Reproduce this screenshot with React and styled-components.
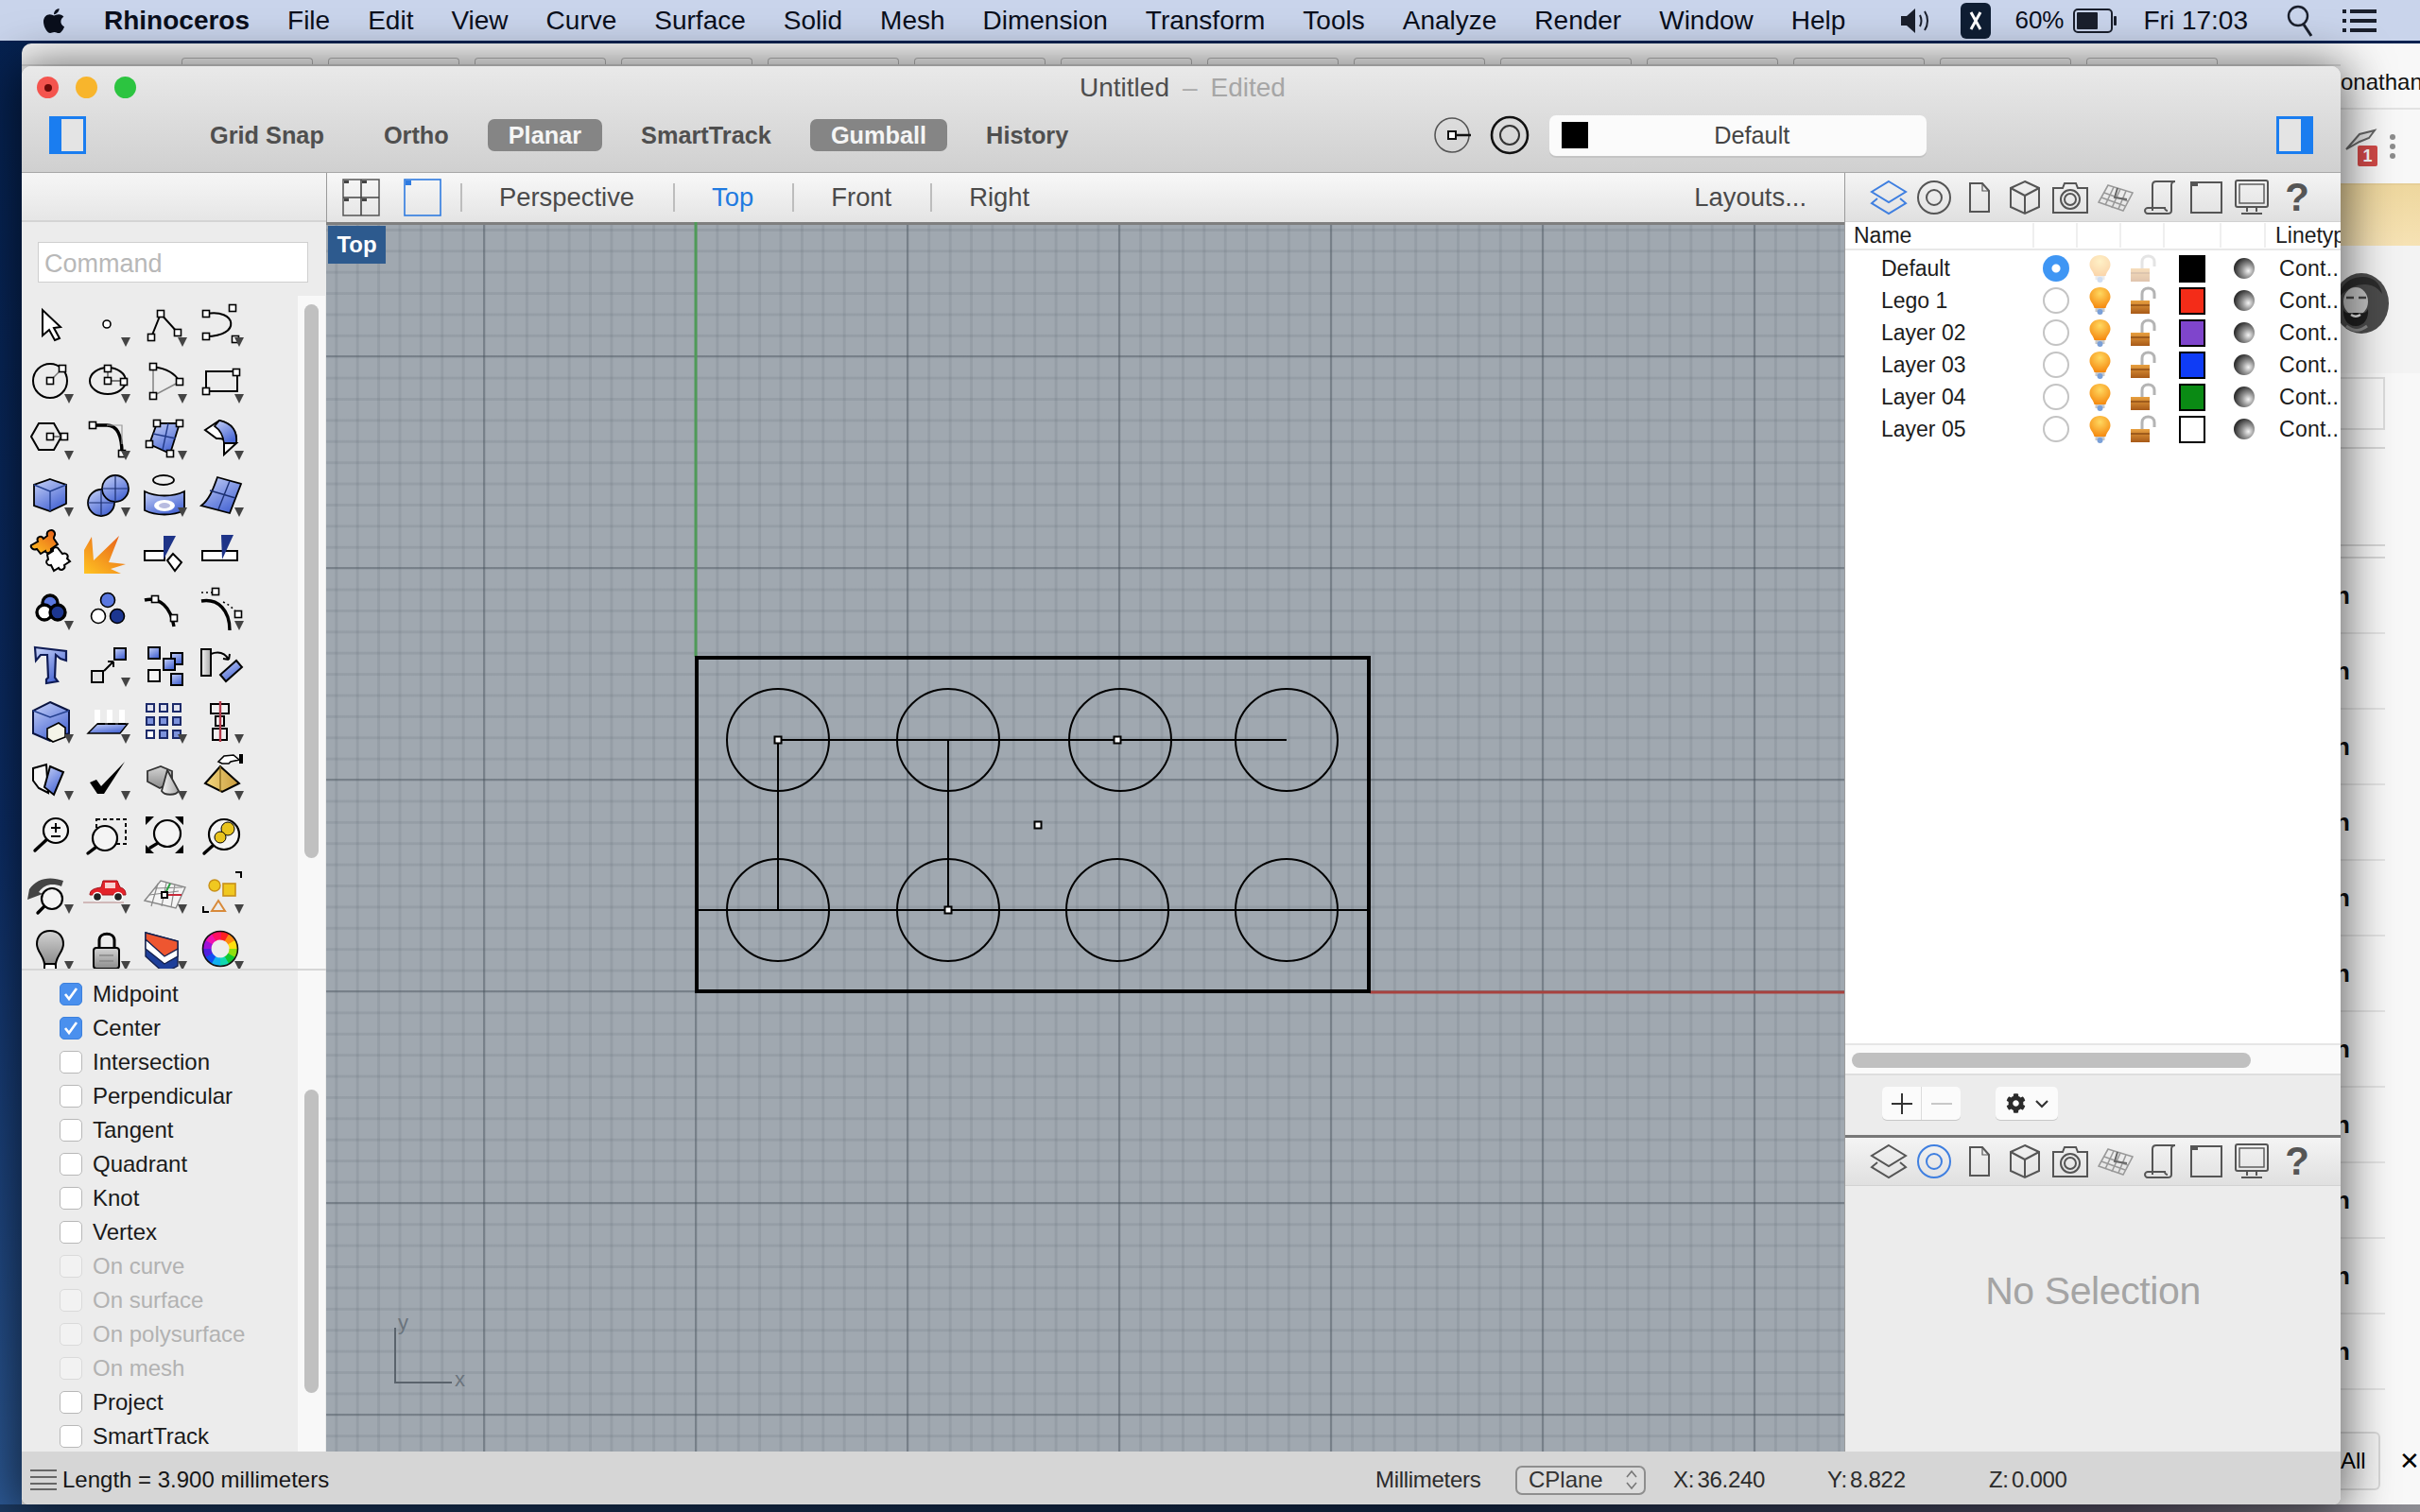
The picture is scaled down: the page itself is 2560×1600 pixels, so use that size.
import React from "react";
import styled, { createGlobalStyle } from "styled-components";
import { FaApple, FaCog } from "react-icons/fa";

const GlobalStyle = createGlobalStyle`
  html, body { margin: 0; padding: 0; background: #0b2a5e; }
  * { box-sizing: border-box; }
  body { font-family: "Liberation Sans", Arial, sans-serif; }
`;

const Desktop = styled.div`
  position: relative;
  width: 2560px;
  height: 1600px;
  overflow: hidden;
  background:
    linear-gradient(90deg, #1c3a62, #14294a 60%, #5a5468 88%, #8c8c92) left bottom / 100% 8px no-repeat,
    linear-gradient(180deg, #05214f, #0c2d66 55%, #2d5a96);
`;

/* menu bar */
const MenuBar = styled.div`
  display: flex;
  align-items: center;
  height: 43px;
  padding: 0 46px 0 42px;
  background: #c9d4eb;
  color: #0a0f1c;
  font-size: 28px;
`;
const MenuItems = styled.div`
  display: flex;
  align-items: center;
  gap: 40px;
  margin-left: 38px;
`;
const AppName = styled.span`
  font-weight: 700;
`;
const Tray = styled.div`
  display: flex;
  align-items: center;
  margin-left: auto;
`;
const TrayItem = styled.div`
  display: flex;
  align-items: center;
  margin-left: ${(p) => p.$ml || 0}px;
  font-size: ${(p) => p.$size || 28}px;
`;

/* browser window that sits behind the app */
const BackWindow = styled.div`
  position: absolute;
  left: 23px;
  top: 46px;
  width: 2537px;
  height: 1546px;
  display: flex;
  background: #f8f8f8;
  border-radius: 10px 0 0 0;
`;
const TabStrip = styled.div`
  width: 2453px;
  height: 24px;
  display: flex;
  align-items: flex-end;
  gap: 16px;
  padding-left: 169px;
  border-bottom: 2px solid #dcdcdc;
`;
const GhostTab = styled.div`
  width: 139px;
  height: 7px;
  border: 1px solid #b8b8b8;
  border-bottom: 0;
  border-radius: 4px 4px 0 0;
`;
const WebColumn = styled.div`
  width: 84px;
  height: 100%;
  display: flex;
  flex-direction: column;
  overflow: hidden;
  color: #111;
`;
const WebUser = styled.div`
  height: 70px;
  padding-top: 27px;
  margin-left: -12px;
  font-size: 24px;
  white-space: nowrap;
  border-bottom: 2px solid #e2e2e2;
`;
const WebTools = styled.div`
  height: 78px;
  display: flex;
  align-items: center;
  gap: 12px;
  padding-left: 4px;
`;
const Badge = styled.div`
  position: absolute;
  left: 14px;
  top: 22px;
  width: 21px;
  height: 22px;
  background: #d24a48;
  border-radius: 2px;
  color: #fff;
  font-size: 18px;
  font-weight: 700;
  text-align: center;
  line-height: 22px;
`;
const PinWrap = styled.div`
  position: relative;
  width: 36px;
  height: 46px;
`;
const Dots = styled.div`
  display: flex;
  flex-direction: column;
  gap: 4px;
  & > i { width: 6px; height: 6px; border-radius: 50%; background: #8c8c8c; }
`;
const WebBanner = styled.div`
  height: 66px;
  background: linear-gradient(180deg, #eed79e, #f6e2b4);
  border-top: 2px solid #e6cf98;
`;
const WebProfile = styled.div`
  height: 135px;
  background: #f3f3f3;
  padding-top: 29px;
  & > svg { display: block; margin-left: -8px; }
`;
const WebBox = styled.div`
  width: 47px;
  height: 56px;
  margin-top: 4px;
  border: 2px solid #dcdcdc;
  border-left: 0;
`;
const WebRule = styled.div`
  width: 47px;
  height: ${(p) => p.$h}px;
  border-bottom: 2px solid #d6d6d6;
`;
const WebRow = styled.div`
  width: 47px;
  height: 80px;
  flex: none;
  display: flex;
  align-items: center;
  font-size: 26px;
  font-weight: 700;
  text-indent: -6px;
  border-bottom: 2px solid #e4e4e4;
  overflow: hidden;
`;
const WebFooter = styled.div`
  display: flex;
  align-items: center;
  position: absolute;
  right: 0;
  bottom: 15px;
  width: 84px;
  height: 62px;
`;
const AllButton = styled.div`
  width: 48px;
  height: 100%;
  display: flex;
  align-items: center;
  font-size: 24px;
  background: #f4f4f4;
  border: 2px solid #d8d8d8;
  border-left: 0;
  border-radius: 0 6px 6px 0;
`;
const CloseMark = styled.div`
  margin-left: 20px;
  font-size: 26px;
`;

/* app window */
const AppWindow = styled.div`
  position: absolute;
  left: 23px;
  top: 70px;
  width: 2453px;
  height: 1522px;
  display: flex;
  flex-direction: column;
  border-radius: 10px 10px 8px 8px;
  overflow: hidden;
  box-shadow: 0 4px 50px 6px rgba(0, 0, 0, 0.6);
  z-index: 1;
`;
const TopBar = styled.div`
  height: 113px;
  flex: none;
  background: linear-gradient(180deg, #e9e9e9, #d0d0d0);
  border-bottom: 1px solid #a8a8a8;
`;
const TitleRow = styled.div`
  position: relative;
  height: 44px;
  display: flex;
  align-items: center;
  justify-content: center;
  padding: 2px 0 0 3px;
  font-size: 28px;
  color: #4e4e4e;
`;
const Lights = styled.div`
  position: absolute;
  left: 16px;
  top: 11px;
  display: flex;
  gap: 18px;
`;
const Light = styled.div`
  width: 23px;
  height: 23px;
  border-radius: 50%;
  background: ${(p) => p.$c};
  display: flex;
  align-items: center;
  justify-content: center;
  & > i { width: 8px; height: 8px; border-radius: 50%; background: #6a0a08; }
`;
const Dash = styled.span`
  margin: 0 14px;
  color: #a8a8a8;
`;
const Edited = styled.span`
  color: #a6a6a6;
`;
const ButtonRow = styled.div`
  height: 68px;
  display: flex;
  align-items: center;
  padding: 0 0 10px 29px;
`;
const Toggles = styled.div`
  display: flex;
  align-items: center;
  gap: 19px;
  margin-left: 109px;
`;
const Toggle = styled.div`
  height: 34px;
  padding: 0 22px;
  display: flex;
  align-items: center;
  border-radius: 7px;
  font-size: 25.3px;
  font-weight: 700;
  color: ${(p) => (p.$on ? "#f5f5f5" : "#4f4f4f")};
  background: ${(p) => (p.$on ? "#858585" : "transparent")};
`;
const LayerPicker = styled.div`
  width: 399px;
  height: 43px;
  margin-left: 21px;
  display: flex;
  align-items: center;
  padding-left: 13px;
  background: #fbfbfb;
  border-radius: 7px;
  box-shadow: 0 2px 0 #c4c4c4;
  font-size: 25.3px;
  color: #444;
`;
const PickerSwatch = styled.div`
  width: 28px;
  height: 28px;
  background: #000;
`;
const PickerLabel = styled.div`
  flex: 1;
  text-align: center;
  padding-right: 12px;
`;
const Spread = styled.div`
  margin-left: ${(p) => p.$ml}px;
  display: flex;
  align-items: center;
  gap: ${(p) => p.$gap || 0}px;
`;

const Body = styled.div`
  flex: 1;
  min-height: 0;
  display: flex;
`;

/* left sidebar */
const Sidebar = styled.div`
  width: 322px;
  flex: none;
  display: flex;
  flex-direction: column;
  background: #ececec;
  overflow: hidden;
`;
const SideStrip = styled.div`
  height: 52px;
  flex: none;
  background: linear-gradient(180deg, #f6f6f6, #e6e6e6);
  border-bottom: 2px solid #d4d4d4;
`;
const CommandZone = styled.div`
  height: 78px;
  flex: none;
  padding: 21px 0 0 17px;
`;
const CommandBox = styled.div`
  width: 286px;
  height: 43px;
  display: flex;
  align-items: center;
  padding: 3px 0 0 6px;
  background: #fff;
  border: 1px solid #cfcfcf;
  font-size: 27px;
  color: #b8b8b8;
`;
const ToolZone = styled.div`
  height: 714px;
  flex: none;
  display: flex;
  border-bottom: 2px solid #d6d6d6;
`;
const ToolGrid = styled.div`
  width: 292px;
  height: 100%;
  display: grid;
  grid-template-columns: repeat(4, 60px);
  grid-auto-rows: 60px;
  overflow: hidden;
`;
const Gutter = styled.div`
  width: 29px;
  flex: none;
  background: #f8f8f8;
  padding: ${(p) => p.$top}px 7px 0;
`;
const Thumb = styled.div`
  width: 15px;
  height: ${(p) => p.$h}px;
  border-radius: 8px;
  background: #c0c0c0;
`;
const SnapZone = styled.div`
  flex: 1;
  min-height: 0;
  display: flex;
`;
const SnapList = styled.div`
  width: 292px;
  padding: 7px 0 0 40px;
`;
const SnapRow = styled.div`
  height: 36px;
  display: flex;
  align-items: center;
  gap: 11px;
  font-size: 24px;
  color: ${(p) => (p.$off ? "#b2b2b2" : "#1a1a1a")};
`;
const CheckBox = styled.div`
  width: 24px;
  height: 24px;
  flex: none;
  display: flex;
  align-items: center;
  justify-content: center;
  border-radius: 5px;
  background: ${(p) => (p.$on ? "#4a90ee" : p.$off ? "#f2f2f2" : "#fff")};
  border: 1px solid ${(p) => (p.$on ? "#3c80dc" : p.$off ? "#dadada" : "#b8b8b8")};
`;

/* middle column */
const Center = styled.div`
  flex: 1;
  min-width: 0;
  display: flex;
  flex-direction: column;
`;
const ViewTabs = styled.div`
  height: 52px;
  flex: none;
  display: flex;
  align-items: center;
  padding: 0 40px 0 16px;
  background: linear-gradient(180deg, #f8f8f8, #e4e4e4);
  border-left: 1px solid #9a9a9a;
  font-size: 27.4px;
  color: #4a4a4a;
`;
const TabGlyph = styled.div`
  display: flex;
  margin-right: ${(p) => p.$mr}px;
`;
const ViewTab = styled.div`
  padding: 0 41px 0 39px;
  line-height: 30px;
  border-left: 2px solid #bdbdbd;
  color: ${(p) => (p.$on ? "#1f7ae0" : "inherit")};
`;
const LayoutsLabel = styled.div`
  margin-left: auto;
`;
const Viewport = styled.div`
  position: relative;
  flex: 1;
  min-height: 0;
  border-top: 3px solid #7f7f7f;
  background-color: #a0a8b0;
  background-image:
    linear-gradient(to right, rgba(66, 76, 86, 0.36) 2px, transparent 2px),
    linear-gradient(to bottom, rgba(66, 76, 86, 0.36) 2px, transparent 2px),
    linear-gradient(to right, rgba(76, 86, 96, 0.13) 3px, transparent 3px),
    linear-gradient(to bottom, rgba(76, 86, 96, 0.13) 3px, transparent 3px);
  background-size: 224px 224px, 224px 224px, 22.4px 22.4px, 22.4px 22.4px;
  background-position: 390px 810px;
`;
const ViewLabel = styled.div`
  position: absolute;
  left: 2px;
  top: 1px;
  width: 61px;
  height: 40px;
  background: #2d5a8e;
  color: #fff;
  font-size: 24px;
  font-weight: 700;
  display: flex;
  align-items: center;
  justify-content: center;
`;
const Canvas = styled.svg`
  position: absolute;
  left: 0;
  top: -3px;
  width: 1606px;
  height: 1301px;
`;

/* right panel */
const Panel = styled.div`
  width: 525px;
  flex: none;
  display: flex;
  flex-direction: column;
  background: #ececec;
  border-left: 1px solid #9a9a9a;
`;
const IconBar = styled.div`
  height: ${(p) => p.$h || 52}px;
  flex: none;
  display: flex;
  align-items: center;
  padding-left: 22px;
  background: linear-gradient(180deg, #f4f4f4, #e0e0e0);
  border-bottom: 1px solid #d2d2d2;
`;
const IconSlot = styled.div`
  width: 48px;
  height: 44px;
  display: flex;
  align-items: center;
  justify-content: center;
  color: #555;
  font-size: 42px;
  font-weight: 700;
`;
const LayerTable = styled.div`
  height: 869px;
  flex: none;
  background: #fff;
  font-size: 23px;
  color: #1c1c1c;
  overflow: hidden;
`;
const columns = "200px 46px 46px 46px 60px 47px 80px";
const TableHead = styled.div`
  display: grid;
  grid-template-columns: ${columns};
  height: 30px;
  margin-bottom: 2px;
  align-items: center;
  font-size: 23px;
  border-bottom: 2px solid #e8e8e8;
  white-space: nowrap;
`;
const HeadCell = styled.div`
  height: 26px;
  line-height: 26px;
  padding-left: ${(p) => p.$pad || 0}px;
  border-right: ${(p) => (p.$last ? "0" : "2px solid #efefef")};
  overflow: ${(p) => (p.$last ? "visible" : "hidden")};
`;
const TableRow = styled.div`
  display: grid;
  grid-template-columns: ${columns};
  height: 34px;
  align-items: center;
`;
const NameCell = styled.div`
  padding-left: 38px;
`;
const IconCell = styled.div`
  display: flex;
  justify-content: center;
  align-items: center;
`;
const TypeCell = styled.div`
  padding-left: 14px;
  white-space: nowrap;
  letter-spacing: 0.3px;
`;
const Radio = styled.div`
  width: 28px;
  height: 28px;
  border-radius: 50%;
  background: ${(p) => (p.$on ? "radial-gradient(circle, #fff 0 4px, #3f96f4 5px)" : "#fff")};
  border: ${(p) => (p.$on ? "0" : "2px solid #c4c4c4")};
`;
const Swatch = styled.div`
  width: 28px;
  height: 29px;
  margin-right: 2px;
  background: ${(p) => p.$c};
  border: 2px solid #000;
`;
const Sphere = styled.div`
  width: 22px;
  height: 22px;
  border-radius: 50%;
  background: radial-gradient(circle at 70% 62%, #f4f4f4 0, #9a9a9a 30%, #2e2e2e 72%);
`;
const ScrollTrack = styled.div`
  height: 32px;
  flex: none;
  padding: 8px 0 0 7px;
  background: #fafafa;
  border-top: 2px solid #e6e6e6;
`;
const ScrollThumb = styled.div`
  width: 422px;
  height: 16px;
  border-radius: 8px;
  background: #c0c0c0;
`;
const ControlBar = styled.div`
  height: 68px;
  flex: none;
  display: flex;
  align-items: center;
  padding: 0 0 4px 39px;
  background: #ececec;
  border-top: 2px solid #dedede;
  border-bottom: 3px solid #787878;
`;
const ControlGroup = styled.div`
  display: flex;
  height: 35px;
  margin-right: 37px;
  background: #fbfbfb;
  border-radius: 5px;
  box-shadow: 0 1px 0 #c8c8c8;
`;
const ControlButton = styled.div`
  width: ${(p) => p.$w}px;
  height: 100%;
  display: flex;
  align-items: center;
  justify-content: center;
  gap: 10px;
  color: #2a2a2a;
  &:not(:last-child) { border-right: 1px solid #dcdcdc; }
`;
const Properties = styled.div`
  flex: 1;
  min-height: 0;
  display: flex;
  align-items: center;
  justify-content: center;
  padding: 0 0 58px 0;
  font-size: 41px;
  letter-spacing: -0.4px;
  color: #a4a4a4;
`;

/* status bar */
const StatusBar = styled.div`
  height: 56px;
  flex: none;
  display: flex;
  align-items: center;
  padding: 4px 0 0 9px;
  background: #d6d6d6;
  font-size: 24px;
  color: #161616;
`;
const StatusMessage = styled.div`
  width: 1423px;
  display: flex;
  align-items: center;
  gap: 6px;
`;
const StatusCell = styled.div`
  width: ${(p) => p.$w}px;
  color: #2c2c2c;
  white-space: nowrap;
  word-spacing: -3px;
  letter-spacing: -0.3px;
`;
const PlaneSelect = styled.div`
  width: 138px;
  height: 31px;
  margin-right: 29px;
  display: flex;
  align-items: center;
  justify-content: space-between;
  padding: 0 6px 0 12px;
  border: 2px solid #8e8e8e;
  border-radius: 7px;
  background: #dcdcdc;
  color: #333;
`;

/* menu bar pieces */
const Speaker = () => (
  <svg width="36" height="30" viewBox="0 0 36 30">
    <path d="M2 10h6l9-8v26l-9-8H2z" fill="#1a1f2c" />
    <path d="M22 9c2 4 2 8 0 12M27 5c4 6 4 14 0 20" fill="none" stroke="#1a1f2c" strokeWidth="2" />
  </svg>
);
const XTile = () => (
  <svg width="32" height="38" viewBox="0 0 32 38">
    <rect width="32" height="38" rx="6" fill="#0f1e33" />
    <path d="M11 10l10 18M21 10L11 28" stroke="#fff" strokeWidth="3" />
  </svg>
);
const Battery = () => (
  <svg width="46" height="26" viewBox="0 0 46 26">
    <rect x="1" y="1" width="40" height="24" rx="4" fill="none" stroke="#1a1f2c" strokeWidth="2" />
    <rect x="4" y="4" width="22" height="18" rx="1" fill="#1a1f2c" />
    <rect x="43" y="8" width="3" height="10" rx="1" fill="#1a1f2c" />
  </svg>
);
const SearchGlyph = () => (
  <svg width="28" height="36" viewBox="0 0 28 36">
    <circle cx="12" cy="13" r="10" fill="none" stroke="#1a1f2c" strokeWidth="2.4" />
    <path d="M18 22l8 12" stroke="#1a1f2c" strokeWidth="3" />
  </svg>
);
const ListGlyph = () => (
  <svg width="36" height="26" viewBox="0 0 36 26">
    {[3, 13, 23].map((y) => (
      <g key={y} fill="#1a1f2c">
        <rect x="0" y={y - 2} width="4" height="4" />
        <rect x="8" y={y - 2} width="28" height="4" />
      </g>
    ))}
  </svg>
);

/* top bar pieces */
const SideToggle = ({ right }) => (
  <svg width="39" height="40" viewBox="0 0 39 40">
    <rect x="1.5" y="1.5" width="36" height="37" fill="#e4e4e4" stroke="#1a7df0" strokeWidth="3" />
    <rect x={right ? 26 : 0} y="0" width="13" height="40" fill="#1a7df0" />
  </svg>
);
const CPlaneGlyph = () => (
  <svg width="40" height="40" viewBox="0 0 40 40">
    <circle cx="19" cy="20" r="18" fill="none" stroke="#555" strokeWidth="1.6" />
    <path d="M19 20h20" stroke="#111" strokeWidth="2.5" />
    <rect x="15" y="16" width="8" height="8" fill="#fff" stroke="#111" strokeWidth="2" />
  </svg>
);
const RingGlyph = () => (
  <svg width="42" height="42" viewBox="0 0 42 42">
    <circle cx="21" cy="21" r="19" fill="none" stroke="#111" strokeWidth="2.6" />
    <circle cx="21" cy="21" r="10" fill="none" stroke="#333" strokeWidth="2" />
  </svg>
);
const LayoutGlyph = () => (
  <svg width="40" height="40" viewBox="0 0 40 40">
    <rect x="1" y="1" width="38" height="38" fill="none" stroke="#555" strokeWidth="1.5" />
    <path d="M1 20h38M20 1v38" stroke="#444" strokeWidth="1.6" />
    <path d="M2 2h5v3H2zM21 2h5v3h-5zM2 21h5v3H2zM21 21h5v3h-5z" fill="#444" />
  </svg>
);
const SingleGlyph = () => (
  <svg width="40" height="40" viewBox="0 0 40 40">
    <rect x="1" y="1" width="38" height="38" fill="none" stroke="#2f7be0" strokeWidth="1.6" />
    <rect x="2" y="2" width="6" height="5" fill="#2f7be0" />
  </svg>
);
const Portrait = () => (
  <svg width="60" height="64" viewBox="0 0 60 64">
    <ellipse cx="30" cy="32" rx="29" ry="32" fill="#4c4c4c" />
    <path d="M6 26c2-16 14-22 26-22 10 0 18 6 20 18-6-8-12-10-20-10S12 18 6 26z" fill="#2c2c2c" />
    <ellipse cx="24" cy="30" rx="13" ry="15" fill="#c4c4c4" />
    <path d="M14 26h8M27 26h8" stroke="#444" strokeWidth="2.4" />
    <path d="M11 38c2 6 6 4 13 4s10 2 13-4c1 10-4 18-13 18S10 48 11 38z" fill="#1f1f1f" />
    <path d="M19 44c3 2 7 2 10 0" stroke="#e8e8e8" strokeWidth="2.4" fill="none" />
    <path d="M14 56c8 6 14 6 22 0" stroke="#8a8a8a" strokeWidth="3" fill="none" />
  </svg>
);

/* panel tab icons */
const stroke = { fill: "none", stroke: "#555", strokeWidth: 2 };
const PanelIcons = {
  layers: (c) => (
    <svg width="40" height="40" viewBox="0 0 40 40" fill="none" stroke={c || "#555"} strokeWidth="2">
      <path d="M20 3l18 11-18 11L2 14z" />
      <path d="M8 21l-6 5 18 11 18-11-6-5" />
    </svg>
  ),
  ring: (c) => (
    <svg width="38" height="38" viewBox="0 0 38 38" fill="none" stroke={c || "#555"} strokeWidth="2">
      <circle cx="19" cy="19" r="17" />
      <circle cx="19" cy="19" r="8" />
    </svg>
  ),
  doc: () => (
    <svg width="26" height="34" viewBox="0 0 26 34" {...stroke}>
      <path d="M3 2h13l7 8v22H3z" />
      <path d="M16 2v8h7" strokeWidth="1.2" />
    </svg>
  ),
  cube: () => (
    <svg width="34" height="38" viewBox="0 0 34 38" {...stroke}>
      <path d="M17 2l15 7v20l-15 7-15-7V9z" />
      <path d="M2 9l15 8 15-8M17 17v19" />
    </svg>
  ),
  camera: () => (
    <svg width="40" height="36" viewBox="0 0 40 36" {...stroke}>
      <path d="M2 8h10l2-5h12l2 5h10v26H2z" />
      <circle cx="20" cy="20" r="10" />
      <circle cx="20" cy="20" r="6" />
    </svg>
  ),
  grid: () => (
    <svg width="38" height="32" viewBox="0 0 38 32" fill="none" stroke="#999" strokeWidth="1.6">
      <path d="M11 3l26 8-10 19-26-9z" />
      <path d="M7 11l25 9M4 16l25 9M17 5L8 24M24 7l-9 20M30 9l-8 19" />
      <path d="M21 6l-3 10 13 2" stroke="#666" strokeWidth="2" />
    </svg>
  ),
  scroll: () => (
    <svg width="36" height="38" viewBox="0 0 36 38" {...stroke}>
      <path d="M9 33V6c0-3 2-4 4-4h20c-3 0-4 2-4 4v27c0 2-2 3-4 3H4c-2 0-3-2-3-3 0-2 2-3 3-3h18c0 2 2 3 3 3" />
    </svg>
  ),
  window: () => (
    <svg width="34" height="34" viewBox="0 0 34 34" {...stroke}>
      <rect x="1" y="1" width="32" height="32" />
      <rect x="2" y="2" width="6" height="3" fill="#555" stroke="none" />
    </svg>
  ),
  monitor: () => (
    <svg width="36" height="38" viewBox="0 0 36 38" {...stroke}>
      <rect x="1" y="1" width="34" height="28" rx="2" />
      <rect x="5" y="5" width="26" height="20" strokeWidth="1.4" />
      <path d="M13 30v4M23 30v4M7 36h22" />
    </svg>
  ),
};
const panelKeys = ["layers", "ring", "doc", "cube", "camera", "grid", "scroll", "window", "monitor"];

const PanelTabs = ({ active, h }) => (
  <IconBar $h={h}>
    {panelKeys.map((k) => (
      <IconSlot key={k}>{PanelIcons[k](k === active ? "#3f7fe0" : undefined)}</IconSlot>
    ))}
    <IconSlot>?</IconSlot>
  </IconBar>
);

const Bulb = ({ faded }) => (
  <svg width="25" height="30" viewBox="0 0 24 30" opacity={faded ? 0.35 : 1}>
    <path d="M12 1c6 0 11 4 11 10 0 5-4 7-5 12H6C5 18 1 16 1 11 1 5 6 1 12 1z" fill="url(#bulbFill)" />
    <rect x="7" y="23" width="10" height="4" fill="#c8c8c8" />
    <circle cx="12" cy="27" r="3" fill="#7aa0d8" />
  </svg>
);
const Padlock = ({ faded }) => (
  <svg width="28" height="30" viewBox="0 0 28 30" opacity={faded ? 0.35 : 1}>
    <path d="M13 15V8c0-8 13-8 13 0v5" fill="none" stroke="#b4b4b4" strokeWidth="3" />
    <rect x="1" y="15" width="20" height="14" fill="url(#lockFill)" />
    <path d="M1 20h20" stroke="#8a4a14" strokeWidth="1.4" />
  </svg>
);

/* toolbox drawings, each one on a 60 x 60 tile */
const Pt = ({ x, y, s = 7 }) => (
  <rect x={x - s / 2} y={y - s / 2} width={s} height={s} fill="#fff" stroke="#000" strokeWidth="1.6" />
);
const Lens = ({ x, y, r, hx, hy, w = 2.2 }) => (
  <g>
    <path d={`M${hx} ${hy}L${x - r * 0.72} ${y + r * 0.72}`} stroke="#000" strokeWidth="3.4" strokeLinecap="round" />
    <circle cx={x} cy={y} r={r} fill="#f4f4f4" stroke="#000" strokeWidth={w} />
  </g>
);
const Sq = ({ x, y, s = 12, fill = "url(#blue)", c = "#000", w = 2 }) => (
  <rect x={x - s / 2} y={y - s / 2} width={s} height={s} fill={fill} stroke={c} strokeWidth={w} />
);
const line = { fill: "none", stroke: "#000", strokeWidth: 2 };
const wheel = ["#ff2020", "#ff8a10", "#ffe010", "#90e010", "#10c830", "#10d8b0", "#10b0f0", "#1050f0", "#5020e0", "#a010d8", "#f010b0", "#ff1060"];

const TOOLS = [
  // row 0
  [0, <path d="M22 15v27l7-6 6 11 5-2-6-11 7-1z" fill="#fff" stroke="#000" strokeWidth="2" />],
  [1, <circle cx="30" cy="30" r="4" fill="#fff" stroke="#000" strokeWidth="1.6" />],
  [1, <g><path d="M17 44l10-25 18 20" {...line} /><Pt x={17} y={44} /><Pt x={27} y={19} /><Pt x={45} y={39} /></g>],
  [1, <g><path d="M15 19c32-6 38 24 0 24" {...line} /><Pt x={15} y={19} /><Pt x={43} y={13} /><Pt x={15} y={43} /><Pt x={46} y={46} /></g>],
  // row 1
  [1, <g><circle cx="30" cy="30" r="18" {...line} /><path d="M30 30l13-13" stroke="#777" strokeWidth="1.4" /><Pt x={30} y={30} /><Pt x={43} y={17} /></g>],
  [1, <g><ellipse cx="31" cy="30" rx="19" ry="14" {...line} /><path d="M31 17v13h17" stroke="#555" strokeWidth="1.4" fill="none" /><Pt x={31} y={17} /><Pt x={31} y={30} /><Pt x={48} y={31} /></g>],
  [1, <g><path d="M19 15v31l28-15" fill="none" stroke="#888" strokeWidth="1.6" /><path d="M19 15c14 2 24 8 28 16" {...line} /><Pt x={19} y={15} /><Pt x={47} y={31} /><Pt x={19} y={46} /></g>],
  [1, <g><rect x="15" y="20" width="33" height="21" {...line} /><Pt x={15} y={41} /><Pt x={47} y={21} /></g>],
  // row 2
  [1, <g><path d="M10 29l8-14h16l8 14-8 14H18z" {...line} /><path d="M30 29h15" stroke="#555" strokeWidth="1.4" /><Pt x={30} y={29} /><Pt x={45} y={29} /></g>],
  [1, <g><path d="M15 17h15c10 0 16 8 16 30" fill="none" stroke="#000" strokeWidth="3.4" /><path d="M30 17h16v20" fill="none" stroke="#999" strokeWidth="1.2" /><Pt x={15} y={17} /><Pt x={46} y={47} /></g>],
  [1, <g><path d="M23 15h24l-10 32-22-10z" fill="url(#blue)" stroke="#000" strokeWidth="1.8" /><path d="M19 26l24 5M35 15l-6 28" stroke="#223a88" strokeWidth="1.4" /><Pt x={23} y={15} /><Pt x={47} y={15} /><Pt x={37} y={47} /><Pt x={15} y={37} /></g>],
  [1, <g><path d="M14 22l15-10c14 3 19 12 18 24H36c0-6-10-5-10-5z" fill="#fff" stroke="#000" strokeWidth="2" /><path d="M24 18l5-6c14 3 19 12 18 24H34c-1-8-4-14-10-18z" fill="url(#blue)" stroke="#000" strokeWidth="1.6" /><path d="M34 36h13l-13 12z" fill="#fff" stroke="#000" strokeWidth="2" /></g>],
  // row 3
  [1, <g><path d="M30 14l17 6v20l-17 8-17-6V20z" fill="url(#blue)" stroke="#000" strokeWidth="1.8" /><path d="M13 20l17 7 17-7M30 27v21" stroke="#24408f" strokeWidth="1.4" fill="none" /></g>],
  [1, <g><circle cx="24" cy="39" r="14" fill="url(#blue)" stroke="#000" strokeWidth="1.8" /><circle cx="39" cy="24" r="14" fill="url(#blue)" stroke="#000" strokeWidth="1.8" /><path d="M10 39h28M24 25v28M25 24h28M39 10v28" stroke="#1b2f70" strokeWidth="1.2" /></g>],
  [1, <g><ellipse cx="30" cy="15" rx="11" ry="5" fill="#f0f0f0" stroke="#000" strokeWidth="1.8" /><path d="M10 27c12 6 30 6 42 0v20c-12 6-30 6-42 0z" fill="url(#blue)" stroke="#000" strokeWidth="1.8" /><ellipse cx="31" cy="42" rx="11" ry="6" fill="#fff" /><ellipse cx="31" cy="42" rx="6" ry="3" fill="#b8bce0" /></g>],
  [1, <g><path d="M27 12l25 7-12 31-30-8c8-6 12-16 17-30z" fill="url(#blue)" stroke="#000" strokeWidth="1.8" /><path d="M19 26l27 8M40 16l-12 30" stroke="#1b2f70" strokeWidth="1.4" /></g>],
  // row 4
  [0, <g strokeWidth="2" stroke="#000"><path d="M10 24l7-4c-2-5 4-7 6-3l4-3c-2-6 6-8 8-3 1 3-2 4-1 6l4 6-7 5c1 4-5 6-6 2l-5 3-4-5c-4 2-7-2-6-4z" fill="url(#orange)" /><path d="M27 34l6-4c-1-4 5-5 6-2l4 5c4-2 7 2 5 5l3 3-6 4c2 4-4 7-6 3l-5 3-3-6c-4 1-7-4-3-6z" fill="#fff" /></g>],
  [0, <path d="M6 54V29l8-14 2 25 27-26-11 28 18 2-16 5 11 5z" fill="url(#orange)" />],
  [0, <g stroke="#000" strokeWidth="2"><rect x="10" y="30" width="21" height="10" fill="#fff" /><path d="M30 14h13l-13 25z" fill="#1e3488" stroke="none" /><path d="M34 40l6-7 9 9-7 9z" fill="#fff" /></g>],
  [0, <g><rect x="11" y="30" width="37" height="10" fill="#fff" stroke="#000" strokeWidth="2" /><path d="M31 13h13l-12 26z" fill="#1e3488" /></g>],
  // row 5
  [1, <g stroke="#000" strokeWidth="3.4"><circle cx="30" cy="25" r="8" fill="#5a78e0" /><circle cx="24" cy="35" r="8" fill="#fff" /><circle cx="38" cy="35" r="8" fill="#1c3690" /></g>],
  [0, <g stroke="#000" strokeWidth="1.6"><circle cx="31" cy="22" r="7.5" fill="#5a78e0" /><circle cx="21" cy="39" r="7.5" fill="#fff" /><circle cx="41" cy="39" r="7.5" fill="#1c3690" /></g>],
  [0, <g><path d="M10 22c16-4 28 8 31 28" fill="none" stroke="#000" strokeWidth="3.4" /><Pt x={21} y={21} /><Pt x={41} y={41} /></g>],
  [1, <g><path d="M10 23c18-3 30 10 30 31" fill="none" stroke="#000" strokeWidth="3.4" /><path d="M10 14h14M33 24c9 4 14 10 16 16" fill="none" stroke="#000" strokeWidth="1.6" strokeDasharray="2 3" /><Pt x={25} y={13} /><Pt x={49} y={37} /></g>],
  // row 6
  [0, <path d="M14 12l33 4v10l-6-2-5-4-1 24 3 4-12 2v-4l2-2-1-24h-7l-5 6z" fill="url(#blue)" stroke="#0f1c55" strokeWidth="2.2" />],
  [1, <g><Sq x={44} y={19} /><Sq x={20} y={43} fill="#e4e4e4" /><path d="M27 37l10-10M37 27h-6M37 27v6" {...line} /></g>],
  [0, <g><Sq x={20} y={18} /><Sq x={44} y={24} /><Sq x={36} y={30} /><Sq x={20} y={42} fill="#f4f4f4" /><Sq x={44} y={46} /></g>],
  [0, <g><rect x="10" y="14" width="10" height="28" fill="url(#pale)" stroke="#000" strokeWidth="2" /><path d="M20 19c8-3 15-1 19 6M39 25l-6-1M39 25l1-6" {...line} /><path d="M36 48l-6-7 17-15 6 7z" fill="url(#blue)" stroke="#000" strokeWidth="2" /></g>],
  // row 7
  [1, <g><path d="M30 10l20 9v24l-20 8-18-8V19z" fill="url(#blue)" stroke="#0a1440" strokeWidth="2" /><path d="M12 19l18 7 20-7" stroke="#24408f" strokeWidth="1.6" fill="none" /><path d="M27 38l12-6 7 5v10l-13 5-6-4z" fill="#f4f4e8" stroke="#000" strokeWidth="1.6" /></g>],
  [1, <g><rect x="17" y="18" width="6" height="20" fill="#fff" /><rect x="30" y="18" width="6" height="20" fill="#fff" /><rect x="43" y="18" width="6" height="20" fill="#fff" /><path d="M10 43l10-10h32l-8 10z" fill="url(#blue)" stroke="#000" strokeWidth="1.4" /><path d="M20 33h32" stroke="#000" strokeWidth="2" strokeDasharray="8 3" /></g>],
  [1, <g>{[16, 30, 44].map((y) => [16, 30, 44].map((x) => <Sq key={`${x}-${y}`} x={x} y={y} s={8} c="#1c2a6a" fill={(x === 16 && y === 44) ? "#fff" : y === 16 ? "#dfe2f0" : "#7c92dc"} />))}</g>],
  [1, <g fill="#f0f0f0" stroke="#000" strokeWidth="2"><rect x="20" y="12" width="19" height="10" /><rect x="25" y="25" width="9" height="10" /><rect x="22" y="38" width="15" height="12" /><path d="M30 9v43" stroke="#b43a4a" strokeWidth="2.4" /></g>],
  // row 8
  [1, <g stroke="#000" strokeWidth="2"><path d="M12 20l14-4 2 30-10-5-6-8z" fill="#f6f6f6" /><path d="M30 18l14 6-10 24-10-8z" fill="url(#blue)" /></g>],
  [1, <path d="M12 35l7-3 5 7 25-26-22 34h-7z" fill="#000" />],
  [1, <g stroke="#333" strokeWidth="1.8"><path d="M13 23l14-5 12 5v11l-13 7-13-7z" fill="url(#gray)" /><path d="M34 22l12 22c-3 5-15 5-18 0z" fill="url(#pale)" /></g>],
  [1, <g><path d="M30 18l20 18-18 9-18-9z" fill="url(#gold)" stroke="#000" strokeWidth="2" /><path d="M30 18v27" stroke="#8a6a1e" strokeWidth="1.4" /><path d="M28 13l6-6 10-1 6 5-9 2-2 2-7 0z" fill="#fff" stroke="#000" strokeWidth="1.6" /><rect x="50" y="5" width="4" height="10" fill="#000" /></g>],
  // row 9
  [0, <g><Lens x={36} y={26} r={13} hx={14} hy={47} /><path d="M31 23h10M36 18v10M31 32h10" stroke="#000" strokeWidth="2" /></g>],
  [0, <g><rect x="19" y="14" width="31" height="26" fill="none" stroke="#000" strokeWidth="2" strokeDasharray="4 3" /><Lens x={28} y={34} r={13} hx={10} hy={50} /></g>],
  [0, <g><path d="M11 11h9l-9 9zM51 11h-9l9 9zM11 50h9l-9-9zM51 50h-9l9-9z" fill="#000" /><Lens x={34} y={29} r={14} hx={16} hy={44} /></g>],
  [0, <g><Lens x={34} y={30} r={16} hx={13} hy={50} /><circle cx="38" cy="24" r="7" fill="#e8c41e" stroke="#000" /><circle cx="30" cy="33" r="6" fill="#e8c41e" stroke="#000" /></g>],
  // row 10
  [1, <g><path d="M8 28c8-12 22-14 36-9l-2 6c-10-4-18-2-24 6l4 2-16 6z" fill="#444" /><Lens x={32} y={38} r={11} hx={17} hy={53} /></g>],
  [1, <g><path d="M12 34c0-6 6-7 12-8l2-7h15l3 7c4 1 6 3 6 8z" fill="#e3222a" stroke="#a01018" strokeWidth="1" /><rect x="28" y="21" width="11" height="6" fill="#f8d0d0" /><circle cx="20" cy="36" r="4.5" fill="#222" stroke="#fff" strokeWidth="1.4" /><circle cx="42" cy="36" r="4.5" fill="#222" stroke="#fff" strokeWidth="1.4" /><path d="M5 42h43" stroke="#c8a8a8" strokeWidth="1.6" /></g>],
  [1, <g><path d="M10 40l17-21 26 7-10 22z" fill="#f4f4f4" stroke="#888" strokeWidth="1.4" /><path d="M15 34l31-4M21 27l29-1M24 22l-7 24M33 21l-5 25M42 23l-4 24" stroke="#888" strokeWidth="1.2" /><path d="M31 34h18" stroke="#c82a3a" strokeWidth="2" /><path d="M31 34l6-12" stroke="#28a040" strokeWidth="2" /><Sq x={31} y={34} s={6} fill="#fff" /></g>],
  [1, <g><circle cx="24" cy="24" r="6" fill="#f0c820" stroke="#c89018" strokeWidth="1.4" /><rect x="33" y="22" width="13" height="13" fill="#f0c820" stroke="#c89018" strokeWidth="1.6" /><path d="M28 40l7 11H21z" fill="none" stroke="#d88a3a" strokeWidth="2" /><path d="M46 10h6v6M12 46v6h6" {...line} /></g>],
  // row 11
  [1, <g><path d="M30 12c9 0 14 6 14 14 0 8-7 12-8 21H24c-1-9-8-13-8-21 0-8 5-14 14-14z" fill="url(#gray)" stroke="#000" strokeWidth="2" /><rect x="24" y="47" width="12" height="7" rx="2" fill="#fff" stroke="#000" strokeWidth="2" /></g>],
  [1, <g><path d="M22 30V22c0-9 16-9 16 0v8" fill="none" stroke="#000" strokeWidth="3" /><rect x="16" y="30" width="27" height="22" rx="3" fill="url(#gray)" stroke="#000" strokeWidth="2" /><path d="M22 38h15M22 44h15" stroke="#888" strokeWidth="1.6" /></g>],
  [1, <g stroke="#14214f" strokeWidth="1.4"><path d="M11 14l34 9v26l-14 8-20-18z" fill="#1e3f9a" /><path d="M11 22l34 9v8l-14 8-20-16z" fill="#fff" /><path d="M11 14l34 9v8l-14 8-20-18z" fill="#ee5630" /></g>],
  [1, <g fill="none" strokeWidth="9">{wheel.map((c, i) => {
    const a0 = (i / 12) * 2 * Math.PI - Math.PI / 2;
    const a1 = ((i + 1.1) / 12) * 2 * Math.PI - Math.PI / 2;
    return <path key={c} stroke={c} d={`M${30 + 14 * Math.cos(a0)} ${31 + 14 * Math.sin(a0)}A14 14 0 0 1 ${30 + 14 * Math.cos(a1)} ${31 + 14 * Math.sin(a1)}`} />;
  })}<circle cx="30" cy="31" r="18.5" stroke="#111" strokeWidth="1.6" /></g>],
];

const ToolTile = ({ flag, children }) => (
  <svg width="60" height="60" viewBox="0 0 60 60">
    {children}
    {flag ? <path d="M45 44h10l-5 10z" fill="#444" /> : null}
  </svg>
);

const GradientDefs = styled.svg`
  position: absolute;
  width: 0;
  height: 0;
`;

const SNAPS = [
  ["Midpoint", "on"], ["Center", "on"], ["Intersection"], ["Perpendicular"], ["Tangent"], ["Quadrant"], ["Knot"], ["Vertex"],
  ["On curve", "off"], ["On surface", "off"], ["On polysurface", "off"], ["On mesh", "off"], ["Project"], ["SmartTrack"],
];
const LAYERS = [
  ["Default", "#000"], ["Lego 1", "#f42c18"], ["Layer 02", "#7f45cc"],
  ["Layer 03", "#0f3cf5"], ["Layer 04", "#0a8a14"], ["Layer 05", "#fff"],
];
const MENUS = ["File", "Edit", "View", "Curve", "Surface", "Solid", "Mesh", "Dimension", "Transform", "Tools", "Analyze", "Render", "Window", "Help"];
const COLS = [823, 1003, 1185, 1361];
const COLS_LOW = [823, 1003, 1182, 1361];

const Drawing = () => (
  <Canvas viewBox="345 235 1606 1301">
    <path d="M736 235V695" stroke="#4f9a58" strokeWidth="3" />
    <path d="M1449 1050H1951" stroke="#a8423e" strokeWidth="3" />
    <rect x="737" y="696" width="711" height="353" fill="none" stroke="#000" strokeWidth="4" />
    {COLS.map((x) => <circle key={x} cx={x} cy="783" r="54" fill="none" stroke="#000" strokeWidth="2" />)}
    {COLS_LOW.map((x) => <circle key={x} cx={x} cy="963" r="54" fill="none" stroke="#000" strokeWidth="2" />)}
    <path d="M823 783H1361M736 963H1449M823 783V963M1003 783V963" fill="none" stroke="#000" strokeWidth="2" />
    {[[823, 783], [1182, 783], [1003, 963], [1098, 873]].map(([x, y]) => (
      <rect key={x} x={x - 3.5} y={y - 3.5} width="7" height="7" fill="#fff" stroke="#000" strokeWidth="2" />
    ))}
    <path d="M418 1405V1463H478" fill="none" stroke="#5a636c" strokeWidth="2" />
    <text x="421" y="1407" fontSize="22" fill="#6b747d" fontFamily="Liberation Sans">y</text>
    <text x="481" y="1467" fontSize="22" fill="#6b747d" fontFamily="Liberation Sans">x</text>
  </Canvas>
);

const App = () => (
  <Desktop>
    <GlobalStyle />
    <GradientDefs>
      <defs>
        <linearGradient id="blue" x1="0" y1="0" x2="0.6" y2="1"><stop offset="0" stopColor="#c8d3f8" /><stop offset="1" stopColor="#4a68d4" /></linearGradient>
        <linearGradient id="orange" x1="0.8" y1="0" x2="0" y2="1"><stop offset="0" stopColor="#e8641a" /><stop offset="1" stopColor="#ffc422" /></linearGradient>
        <linearGradient id="pale" x1="0" y1="0" x2="1" y2="0"><stop offset="0" stopColor="#f4f4f4" /><stop offset="1" stopColor="#a8a8a8" /></linearGradient>
        <linearGradient id="gray" x1="0" y1="0" x2="0" y2="1"><stop offset="0" stopColor="#d4d4d4" /><stop offset="1" stopColor="#8c8c8c" /></linearGradient>
        <linearGradient id="gold" x1="0" y1="0" x2="1" y2="0"><stop offset="0" stopColor="#f4d880" /><stop offset="1" stopColor="#c89a3c" /></linearGradient>
        <radialGradient id="bulbFill" cx="0.5" cy="0.3" r="0.7"><stop offset="0" stopColor="#ffd860" /><stop offset="1" stopColor="#f58a10" /></radialGradient>
        <linearGradient id="lockFill" x1="0" y1="0" x2="0" y2="1"><stop offset="0" stopColor="#e8a040" /><stop offset="1" stopColor="#a85a18" /></linearGradient>
      </defs>
    </GradientDefs>

    <MenuBar>
      <FaApple size={30} />
      <MenuItems>
        <AppName>Rhinoceros</AppName>
        {MENUS.map((m) => <span key={m}>{m}</span>)}
      </MenuItems>
      <Tray>
        <TrayItem><Speaker /></TrayItem>
        <TrayItem $ml={29}><XTile /></TrayItem>
        <TrayItem $ml={25} $size={26}>60%</TrayItem>
        <TrayItem $ml={9}><Battery /></TrayItem>
        <TrayItem $ml={29}>Fri 17:03</TrayItem>
        <TrayItem $ml={41}><SearchGlyph /></TrayItem>
        <TrayItem $ml={31}><ListGlyph /></TrayItem>
      </Tray>
    </MenuBar>

    <BackWindow>
      <TabStrip>
        {Array.from({ length: 14 }, (_, i) => <GhostTab key={i} />)}
      </TabStrip>
      <WebColumn>
        <WebUser>Jonathan</WebUser>
        <WebTools>
          <PinWrap>
            <svg width="36" height="30" viewBox="0 0 36 30">
              <path d="M2 26l14-16 16-4-6 8-10 4z" fill="#e6e6e6" stroke="#666" strokeWidth="2" />
            </svg>
            <Badge>1</Badge>
          </PinWrap>
          <Dots><i /><i /><i /></Dots>
        </WebTools>
        <WebBanner />
        <WebProfile><Portrait /></WebProfile>
        <WebBox />
        <WebRule $h={20} />
        <WebRule $h={103} />
        <WebRule $h={13} />
        {Array.from({ length: 11 }, (_, i) => <WebRow key={i}>n</WebRow>)}
      </WebColumn>
      <WebFooter>
        <AllButton>All</AllButton>
        <CloseMark>✕</CloseMark>
      </WebFooter>
    </BackWindow>

    <AppWindow>
      <TopBar>
        <TitleRow>
          <Lights>
            <Light $c="#f4544e"><i /></Light>
            <Light $c="#f8b52c" />
            <Light $c="#2cc440" />
          </Lights>
          Untitled<Dash>–</Dash><Edited>Edited</Edited>
        </TitleRow>
        <ButtonRow>
          <SideToggle />
          <Toggles>
            <Toggle>Grid Snap</Toggle>
            <Toggle>Ortho</Toggle>
            <Toggle $on>Planar</Toggle>
            <Toggle>SmartTrack</Toggle>
            <Toggle $on>Gumball</Toggle>
            <Toggle>History</Toggle>
          </Toggles>
          <Spread $ml={365} $gap={19}><CPlaneGlyph /><RingGlyph /></Spread>
          <LayerPicker><PickerSwatch /><PickerLabel>Default</PickerLabel></LayerPicker>
          <Spread $ml={370}><SideToggle right /></Spread>
        </ButtonRow>
      </TopBar>

      <Body>
        <Sidebar>
          <SideStrip />
          <CommandZone><CommandBox>Command</CommandBox></CommandZone>
          <ToolZone>
            <ToolGrid>
              {TOOLS.map(([flag, art], i) => <ToolTile key={i} flag={flag}>{art}</ToolTile>)}
            </ToolGrid>
            <Gutter $top={9}><Thumb $h={586} /></Gutter>
          </ToolZone>
          <SnapZone>
            <SnapList>
              {SNAPS.map(([label, state]) => (
                <SnapRow key={label} $off={state === "off"}>
                  <CheckBox $on={state === "on"} $off={state === "off"}>
                    {state === "on" ? (
                      <svg width="16" height="16" viewBox="0 0 16 16">
                        <path d="M2 8l4 5 8-11" fill="none" stroke="#fff" strokeWidth="2.6" />
                      </svg>
                    ) : null}
                  </CheckBox>
                  {label}
                </SnapRow>
              ))}
            </SnapList>
            <Gutter $top={126}><Thumb $h={321} /></Gutter>
          </SnapZone>
        </Sidebar>

        <Center>
          <ViewTabs>
            <TabGlyph $mr={25}><LayoutGlyph /></TabGlyph>
            <TabGlyph $mr={20}><SingleGlyph /></TabGlyph>
            <ViewTab>Perspective</ViewTab>
            <ViewTab $on>Top</ViewTab>
            <ViewTab>Front</ViewTab>
            <ViewTab>Right</ViewTab>
            <LayoutsLabel>Layouts...</LayoutsLabel>
          </ViewTabs>
          <Viewport>
            <Drawing />
            <ViewLabel>Top</ViewLabel>
          </Viewport>
        </Center>

        <Panel>
          <PanelTabs active="layers" />
          <LayerTable>
            <TableHead>
              <HeadCell $pad={9}>Name</HeadCell>
              <HeadCell /><HeadCell /><HeadCell /><HeadCell /><HeadCell />
              <HeadCell $pad={10} $last>Linetype</HeadCell>
            </TableHead>
            {LAYERS.map(([name, color], i) => (
              <TableRow key={name}>
                <NameCell>{name}</NameCell>
                <IconCell><Radio $on={i === 0} /></IconCell>
                <IconCell><Bulb faded={i === 0} /></IconCell>
                <IconCell><Padlock faded={i === 0} /></IconCell>
                <IconCell><Swatch $c={color} /></IconCell>
                <IconCell><Sphere /></IconCell>
                <TypeCell>Cont..</TypeCell>
              </TableRow>
            ))}
          </LayerTable>
          <ScrollTrack><ScrollThumb /></ScrollTrack>
          <ControlBar>
            <ControlGroup>
              <ControlButton $w={42}>
                <svg width="22" height="22" viewBox="0 0 22 22"><path d="M11 0v22M0 11h22" stroke="#333" strokeWidth="2" /></svg>
              </ControlButton>
              <ControlButton $w={41}>
                <svg width="22" height="4" viewBox="0 0 22 4"><path d="M0 2h22" stroke="#c8c8c8" strokeWidth="2" /></svg>
              </ControlButton>
            </ControlGroup>
            <ControlGroup>
              <ControlButton $w={66}>
                <FaCog size={21} />
                <svg width="14" height="10" viewBox="0 0 14 10"><path d="M1 2l6 6 6-6" fill="none" stroke="#333" strokeWidth="2.2" /></svg>
              </ControlButton>
            </ControlGroup>
          </ControlBar>
          <PanelTabs active="ring" h={51} />
          <Properties>No Selection</Properties>
        </Panel>
      </Body>

      <StatusBar>
        <StatusMessage>
          <svg width="28" height="24" viewBox="0 0 28 24">
            <path d="M0 2h28M0 9h28M0 16h28M0 22h28" stroke="#666" strokeWidth="1.8" />
          </svg>
          Length = 3.900 millimeters
        </StatusMessage>
        <StatusCell $w={148}>Millimeters</StatusCell>
        <PlaneSelect>
          CPlane
          <svg width="14" height="24" viewBox="0 0 14 24">
            <path d="M2 9l5-6 5 6M2 15l5 6 5-6" fill="none" stroke="#777" strokeWidth="1.6" />
          </svg>
        </PlaneSelect>
        <StatusCell $w={163}>X: 36.240</StatusCell>
        <StatusCell $w={171}>Y: 8.822</StatusCell>
        <StatusCell $w={100}>Z: 0.000</StatusCell>
      </StatusBar>
    </AppWindow>
  </Desktop>
);

export default App;
